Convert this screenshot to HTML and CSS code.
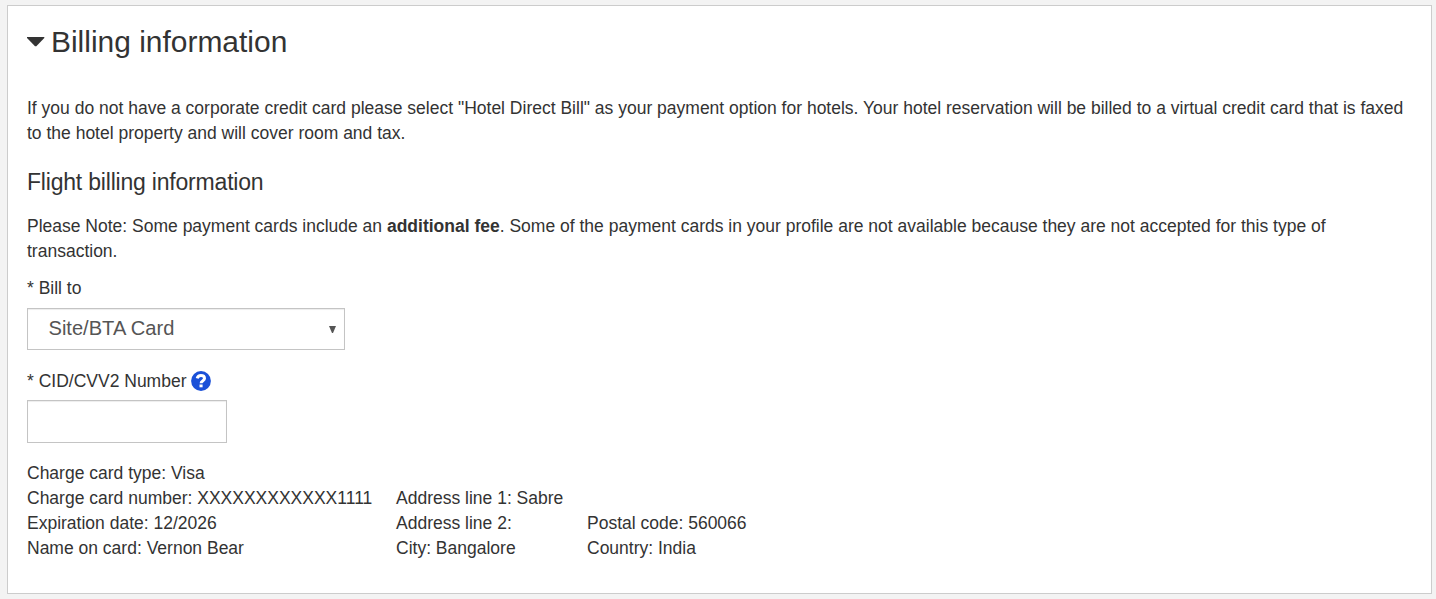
FILE: index.html
```html
<!DOCTYPE html>
<html lang="en">
<head>
<meta charset="utf-8">
<title>Billing information</title>
<link rel="stylesheet" href="styles.css">
</head>
<body>
<section class="panel">
  <h1 class="title"><svg class="caret" width="18" height="10" viewBox="0 0 18 10"><path d="M0 0H17.3V1L9.3 9.2H8L0 1Z" fill="#333"/></svg><span>Billing information</span></h1>
  <p class="intro">If you do not have a corporate credit card please select "Hotel Direct Bill" as your payment option for hotels. Your hotel reservation will be billed to a virtual credit card that is faxed to the hotel property and will cover room and tax.</p>
  <h2 class="subtitle">Flight billing information</h2>
  <p class="note">Please Note: Some payment cards include an <b>additional fee</b>. Some of the payment cards in your profile are not available because they are not accepted for this type of transaction.</p>
  <div class="label">* Bill to</div>
  <div class="select"><span>Site/BTA Card</span><svg width="7" height="7" viewBox="0 0 7 7"><path d="M0 0H7L4 7H3Z" fill="#555"/></svg></div>
  <div class="label cvv-label"><span>* CID/CVV2 Number</span><svg width="20" height="20" viewBox="0 0 20 20"><circle cx="10" cy="10" r="9.9" fill="#1a50d8"/><path d="M6.2 7.4C6.7 5.5 8 4.6 9.9 4.6C12 4.6 13.5 5.8 13.5 7.5C13.5 9.8 10.1 9.5 10.1 12.3" fill="none" stroke="#fff" stroke-width="3"/><path d="M8.5 13.5h3.1v2.8H8.5z" fill="#fff"/></svg></div>
  <input class="input" type="text" aria-label="CID/CVV2 Number">
  <div class="details">
    <div class="col card"><div>Charge card type: Visa</div><div>Charge card number: XXXXXXXXXXXX1111</div><div>Expiration date: 12/2026</div><div>Name on card: Vernon Bear</div></div>
    <div class="col address"><div>Address line 1: Sabre</div><div>Address line 2:</div><div>City: Bangalore</div></div>
    <div class="col"><div>Postal code: 560066</div><div>Country: India</div></div>
  </div>
</section>
</body>
</html>
```
FILE: styles.css
```css
* { box-sizing: border-box; }
body { margin: 0; padding: 5px 4px 5px 7px; height: 599px; overflow: hidden; background: #f3f3f3; color: #333; font: 17.5px/25px "Liberation Sans", Arial, sans-serif; }
.panel { height: 589px; padding: 18px 19px 0; background: #fff; border: 1px solid #ccc; }
.title { display: flex; align-items: center; gap: 6px; height: 36px; margin: 0 0 36px; font-size: 29.95px; font-weight: 400; line-height: 36px; }
.intro { margin: 0; }
.subtitle { margin: 21px 0 17px; font-size: 23px; font-weight: 400; letter-spacing: -0.2px; line-height: 30px; }
.note { margin: 0; }
.label { margin-top: 12px; }
.select { display: flex; align-items: center; justify-content: space-between; width: 318px; height: 42px; margin-top: 7px; padding: 0 8px 2px 20.5px; border: 1px solid #c4c4c4; box-shadow: inset 0 1px 1px #00000013; font-size: 20.1px; color: #555; }
.select svg { margin-top: 2px; }
.cvv-label { display: flex; align-items: flex-start; gap: 4px; margin-top: 19px; }
.cvv-label svg { margin-top: 2px; }
.input { display: block; width: 200px; height: 43px; margin-top: 6px; border: 1px solid #c4c4c4; border-radius: 0; box-shadow: inset 0 1px 1px #00000013; font: inherit; }
.details { display: flex; align-items: flex-end; margin-top: 18px; white-space: nowrap; }
.card { width: 369px; }
.address { width: 191px; }
```
